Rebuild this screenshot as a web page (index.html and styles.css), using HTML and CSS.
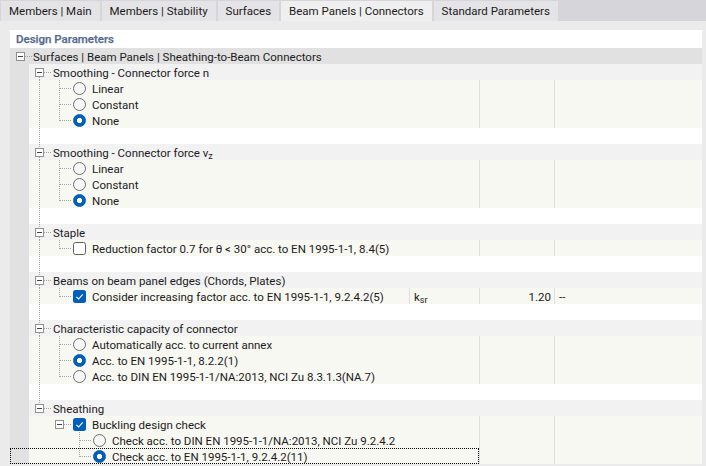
FILE: index.html
```html
<!DOCTYPE html>
<html>
<head>
<meta charset="utf-8">
<link rel="stylesheet" href="styles.css">
</head>
<body>
<div class="tabs">
  <div class="tab">Members | Main</div>
  <div class="tab">Members | Stability</div>
  <div class="tab">Surfaces</div>
  <div class="tab active">Beam Panels | Connectors</div>
  <div class="tab">Standard Parameters</div>
</div>
<div class="content">
  <div class="panel">
    <div class="panel-title">Design Parameters</div>
    <div class="tree">
      <div class="row root">
        <div class="lead"><span class="node exp"><span class="box"></span></span><span class="label">Surfaces | Beam Panels | Sheathing-to-Beam Connectors</span></div>
        <div class="val"></div><div class="unit"></div>
      </div>

      <div class="row grp">
        <div class="lead"><span class="gutter"></span><span class="node exp first"><span class="box"></span></span><span class="label">Smoothing - Connector force n</span></div>
        <div class="val"></div><div class="unit"></div>
      </div>
      <div class="row opt">
        <div class="lead"><span class="gutter"></span><span class="ind pipe"></span><span class="node tee"></span><span class="radio"></span><span class="label">Linear</span></div>
        <div class="val"></div><div class="unit"></div>
      </div>
      <div class="row opt">
        <div class="lead"><span class="gutter"></span><span class="ind pipe"></span><span class="node tee"></span><span class="radio"></span><span class="label">Constant</span></div>
        <div class="val"></div><div class="unit"></div>
      </div>
      <div class="row opt">
        <div class="lead"><span class="gutter"></span><span class="ind pipe"></span><span class="node elbow"></span><span class="radio on"></span><span class="label">None</span></div>
        <div class="val"></div><div class="unit"></div>
      </div>
      <div class="row blank">
        <div class="lead"><span class="gutter"></span><span class="ind pipe"></span></div>
        <div class="val"></div><div class="unit"></div>
      </div>

      <div class="row grp">
        <div class="lead"><span class="gutter"></span><span class="node exp mid"><span class="box"></span></span><span class="label">Smoothing - Connector force v<sub>z</sub></span></div>
        <div class="val"></div><div class="unit"></div>
      </div>
      <div class="row opt">
        <div class="lead"><span class="gutter"></span><span class="ind pipe"></span><span class="node tee"></span><span class="radio"></span><span class="label">Linear</span></div>
        <div class="val"></div><div class="unit"></div>
      </div>
      <div class="row opt">
        <div class="lead"><span class="gutter"></span><span class="ind pipe"></span><span class="node tee"></span><span class="radio"></span><span class="label">Constant</span></div>
        <div class="val"></div><div class="unit"></div>
      </div>
      <div class="row opt">
        <div class="lead"><span class="gutter"></span><span class="ind pipe"></span><span class="node elbow"></span><span class="radio on"></span><span class="label">None</span></div>
        <div class="val"></div><div class="unit"></div>
      </div>
      <div class="row blank">
        <div class="lead"><span class="gutter"></span><span class="ind pipe"></span></div>
        <div class="val"></div><div class="unit"></div>
      </div>

      <div class="row grp">
        <div class="lead"><span class="gutter"></span><span class="node exp mid"><span class="box"></span></span><span class="label">Staple</span></div>
        <div class="val"></div><div class="unit"></div>
      </div>
      <div class="row opt">
        <div class="lead"><span class="gutter"></span><span class="ind pipe"></span><span class="node elbow"></span><span class="check"></span><span class="label">Reduction factor 0.7 for θ &lt; 30° acc. to EN 1995-1-1, 8.4(5)</span></div>
        <div class="val"></div><div class="unit"></div>
      </div>
      <div class="row blank">
        <div class="lead"><span class="gutter"></span><span class="ind pipe"></span></div>
        <div class="val"></div><div class="unit"></div>
      </div>

      <div class="row grp">
        <div class="lead"><span class="gutter"></span><span class="node exp mid"><span class="box"></span></span><span class="label">Beams on beam panel edges (Chords, Plates)</span></div>
        <div class="val"></div><div class="unit"></div>
      </div>
      <div class="row opt">
        <div class="lead"><span class="gutter"></span><span class="ind pipe"></span><span class="node elbow"></span><svg class="check-on" width="13" height="13" viewBox="0 0 13 13"><rect width="13" height="13" rx="2.5" fill="#005fb8"/><path d="M3.4 6.9 L5.6 9 L9.7 4.4" fill="none" stroke="#fff" stroke-width="1.1"/></svg><span class="label">Consider increasing factor acc. to EN 1995-1-1, 9.2.4.2(5)</span><span class="sym">k<sub>sr</sub></span></div>
        <div class="val num">1.20</div><div class="unit">--</div>
      </div>
      <div class="row blank">
        <div class="lead"><span class="gutter"></span><span class="ind pipe"></span></div>
        <div class="val"></div><div class="unit"></div>
      </div>

      <div class="row grp">
        <div class="lead"><span class="gutter"></span><span class="node exp mid"><span class="box"></span></span><span class="label">Characteristic capacity of connector</span></div>
        <div class="val"></div><div class="unit"></div>
      </div>
      <div class="row opt">
        <div class="lead"><span class="gutter"></span><span class="ind pipe"></span><span class="node tee"></span><span class="radio"></span><span class="label">Automatically acc. to current annex</span></div>
        <div class="val"></div><div class="unit"></div>
      </div>
      <div class="row opt">
        <div class="lead"><span class="gutter"></span><span class="ind pipe"></span><span class="node tee"></span><span class="radio on"></span><span class="label">Acc. to EN 1995-1-1, 8.2.2(1)</span></div>
        <div class="val"></div><div class="unit"></div>
      </div>
      <div class="row opt">
        <div class="lead"><span class="gutter"></span><span class="ind pipe"></span><span class="node elbow"></span><span class="radio"></span><span class="label">Acc. to DIN EN 1995-1-1/NA:2013, NCI Zu 8.3.1.3(NA.7)</span></div>
        <div class="val"></div><div class="unit"></div>
      </div>
      <div class="row blank">
        <div class="lead"><span class="gutter"></span><span class="ind pipe"></span></div>
        <div class="val"></div><div class="unit"></div>
      </div>

      <div class="row grp">
        <div class="lead"><span class="gutter"></span><span class="node exp last"><span class="box"></span></span><span class="label">Sheathing</span></div>
        <div class="val"></div><div class="unit"></div>
      </div>
      <div class="row opt">
        <div class="lead"><span class="gutter"></span><span class="ind"></span><span class="node exp"><span class="box"></span></span><svg class="check-on" width="13" height="13" viewBox="0 0 13 13"><rect width="13" height="13" rx="2.5" fill="#005fb8"/><path d="M3.4 6.9 L5.6 9 L9.7 4.4" fill="none" stroke="#fff" stroke-width="1.1"/></svg><span class="label">Buckling design check</span></div>
        <div class="val"></div><div class="unit"></div>
      </div>
      <div class="row opt">
        <div class="lead"><span class="gutter"></span><span class="ind"></span><span class="ind"></span><span class="node tee"></span><span class="radio"></span><span class="label">Check acc. to DIN EN 1995-1-1/NA:2013, NCI Zu 9.2.4.2</span></div>
        <div class="val"></div><div class="unit"></div>
      </div>
      <div class="row opt focus">
        <div class="lead"><span class="gutter"></span><span class="ind"></span><span class="ind"></span><span class="node elbow"></span><span class="radio on"></span><span class="label">Check acc. to EN 1995-1-1, 9.2.4.2(11)</span></div>
        <div class="val"></div><div class="unit"></div>
      </div>
    </div>
  </div>
</div>
</body>
</html>
```

FILE: styles.css
```css
html, body {
  margin: 0;
  padding: 0;
}
body {
  width: 706px;
  height: 466px;
  overflow: hidden;
  background: #ebebeb;
  font-family: Roboto, "Noto Sans", sans-serif;
  font-size: 11.5px;
  color: #1b1b1b;
  --vd: repeating-linear-gradient(to bottom, #a3a3a3 0 1px, transparent 1px 2px);
  --hd: repeating-linear-gradient(to right, #a3a3a3 0 1px, transparent 1px 2px);
}

.tabs {
  height: 21px;
  box-sizing: border-box;
  padding: 1px 0 0 1px;
  display: flex;
  gap: 2px;
  background: #d5d5da;
}
.tab {
  padding: 1px 8px 0;
  line-height: 19px;
  background: #e4e4e6;
  white-space: nowrap;
}
.tab.active {
  background: #efefef;
}

.content {
  padding: 9px 0 0 10px;
}
.panel {
  width: 692px;
  background: #fff;
}
.panel-title {
  height: 18px;
  line-height: 19px;
  padding-left: 6px;
  color: #566a8e;
  font-weight: 500;
  -webkit-text-stroke: 0.25px #566a8e;
}

.row {
  display: grid;
  grid-template-columns: 469px 75px 148px;
  height: 16px;
  line-height: 19px;
  white-space: nowrap;
}
.row.root { background: #e1e1e1; }
.row.grp { background: #f2f2f2; }
.row.opt { background: #f8f8f3; }
.row.blank { background: #fff; }

.lead {
  display: flex;
  align-items: flex-start;
  overflow: hidden;
  min-width: 0;
  height: 16px;
}
.gutter {
  flex: none;
  width: 19px;
  height: 16px;
  background: #e1e1e1;
}
.ind {
  flex: none;
  width: 20px;
  height: 16px;
}
.ind.pipe {
  background: var(--vd) 10px 0 / 1px 16px no-repeat;
}
.node {
  flex: none;
  width: 24px;
  height: 16px;
}
.node.tee {
  background: var(--vd) 10px 0 / 1px 16px no-repeat,
              var(--hd) 11px 8px / 12px 1px no-repeat;
}
.node.elbow {
  background: var(--vd) 10px 0 / 1px 9px no-repeat,
              var(--hd) 11px 8px / 12px 1px no-repeat;
}
.node.exp {
  display: flex;
  background: var(--hd) 15px 8px / 8px 1px no-repeat;
}
.node.exp.first {
  background: var(--hd) 15px 8px / 8px 1px no-repeat,
              var(--vd) 10px 13px / 1px 3px no-repeat;
}
.node.exp.mid {
  background: var(--hd) 15px 8px / 8px 1px no-repeat,
              var(--vd) 10px 0 / 1px 4px no-repeat,
              var(--vd) 10px 13px / 1px 3px no-repeat;
}
.node.exp.last {
  background: var(--hd) 15px 8px / 8px 1px no-repeat,
              var(--vd) 10px 0 / 1px 4px no-repeat;
}
.box {
  width: 9px;
  height: 9px;
  box-sizing: border-box;
  margin: 4px 0 0 6px;
  border: 1px solid #8f8f8f;
  background: #fff linear-gradient(#444, #444) center / 5px 1px no-repeat;
}

.radio {
  flex: none;
  width: 13px;
  height: 13px;
  box-sizing: border-box;
  margin: 2px 6px 0 0;
  border: 1px solid #6e6e6e;
  border-radius: 50%;
  background: #f6f6f6;
}
.radio.on {
  border-color: #005fb8;
  background: radial-gradient(circle, #fff 0 2.3px, #005fb8 2.9px);
}
.check {
  flex: none;
  width: 13px;
  height: 13px;
  box-sizing: border-box;
  margin: 2px 6px 0 0;
  border: 1px solid #5f5f5f;
  border-radius: 2.5px;
  background: #fff;
}
.check-on {
  flex: none;
  display: block;
  margin: 2px 6px 0 0;
}

.label {
  flex: 1;
  min-width: 0;
}
.row.root .label { margin-left: -1px; }

sub {
  font-size: 9px;
  vertical-align: -2px;
  line-height: 0;
}

.sym {
  flex: none;
  width: 70px;
  box-sizing: border-box;
  height: 16px;
  padding-left: 4px;
  border-left: 1px solid #dedede;
}

.val, .unit {
  box-sizing: border-box;
  height: 16px;
  overflow: hidden;
}
.row.opt .val, .row.opt .unit {
  border-left: 1px solid #dedede;
}
.val.num {
  text-align: right;
  padding-right: 3px;
}
.unit {
  padding-left: 4px;
}

.row.focus .lead {
  outline: 1px dotted #000;
  outline-offset: -1px;
}
```
